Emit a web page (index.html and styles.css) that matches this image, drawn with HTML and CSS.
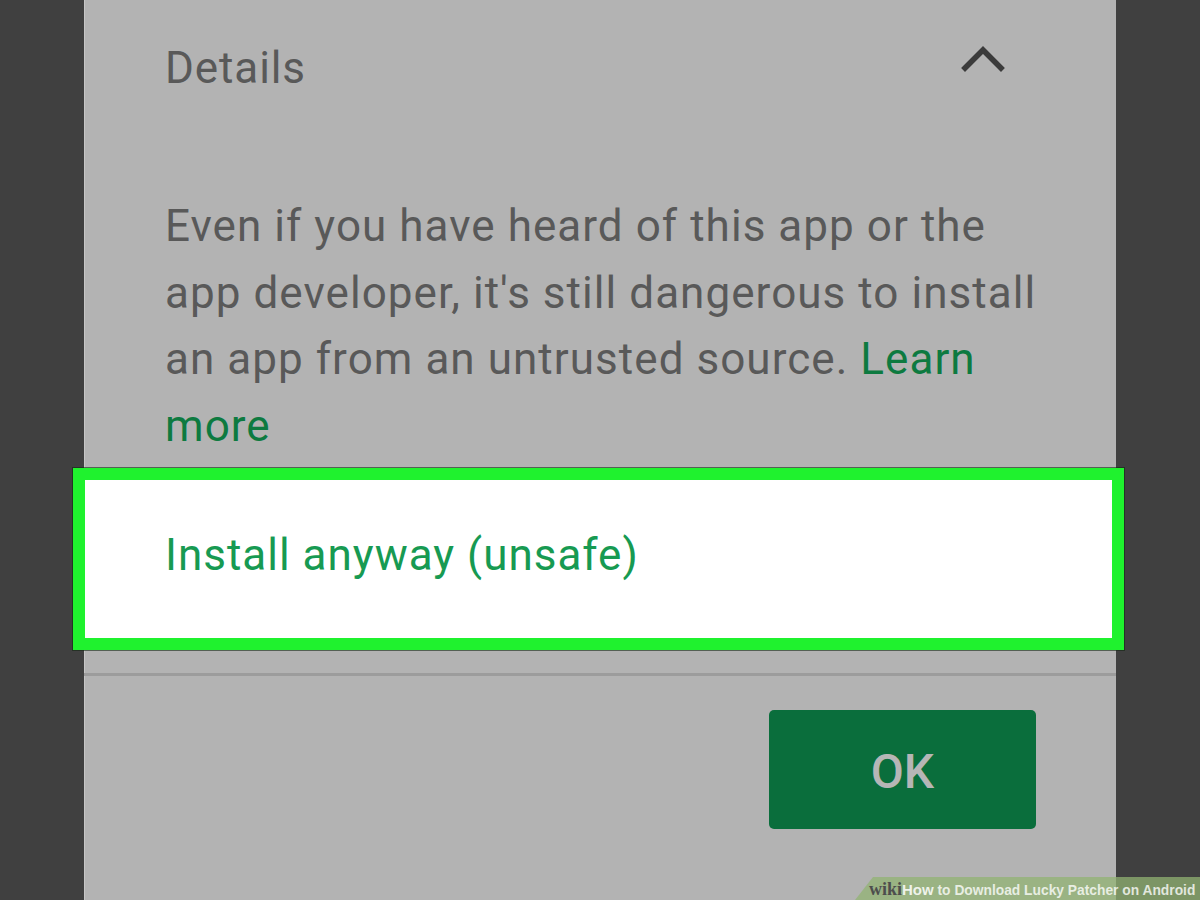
FILE: index.html
```html
<!DOCTYPE html>
<html lang="en">
<head>
<meta charset="utf-8">
<title>Details</title>
<link rel="stylesheet" href="styles.css">
</head>
<body>
<div class="dialog">
  <div class="header">
    <span class="title">Details</span>
    <svg class="chevron" width="44" height="28" viewBox="0 0 44 28" aria-hidden="true">
      <polyline points="4,24 22,6 40,24" fill="none" stroke="#3b3b3b" stroke-width="5.5" stroke-linejoin="miter" stroke-linecap="square"/>
    </svg>
  </div>
  <p class="body-text">Even if you have heard of this app or the<br>app developer, it's still dangerous to install<br>an app from an untrusted source. <span class="link">Learn</span><br><span class="link">more</span></p>
  <div class="install-box">
    <span class="install">Install anyway (unsafe)</span>
  </div>
  <div class="divider"></div>
  <div class="actions">
    <button class="ok" type="button">OK</button>
  </div>
</div>
<div class="watermark"><span class="wiki">wiki</span><span class="how">How</span> to Download Lucky Patcher on Android</div>
</body>
</html>
```
FILE: styles.css
```css
html, body {
  margin: 0;
  padding: 0;
}
body {
  background: #404040;
  font-family: Roboto, "Noto Sans", sans-serif;
  width: 1200px;
  height: 900px;
  overflow: hidden;
  position: relative;
}
.dialog {
  margin-left: 84px;
  width: 1032px;
  height: 900px;
  background: #b3b3b3;
  box-shadow: inset 1px 0 0 #c6c6c6;
  display: flex;
  flex-direction: column;
}
.header {
  display: flex;
  justify-content: space-between;
  align-items: flex-start;
  padding: 35px 111px 0 81px;
}
.title {
  font-size: 44px;
  line-height: 66px;
  letter-spacing: 0.9px;
  color: #595959;
}
.chevron {
  margin-top: 9px;
  display: block;
}
.body-text {
  margin: 92px 0 0 0;
  padding: 0 10px 0 81px;
  font-size: 44px;
  line-height: 66.5px;
  letter-spacing: 1.05px;
  color: #595959;
  white-space: nowrap;
}
.link {
  color: #0d7a40;
}
.install-box {
  margin: 9px -8px 0 -11px;
  border: 12px solid #1ff22e;
  background: #ffffff;
  height: 158px;
  box-sizing: content-box;
  padding: 0 0 0 80px;
  box-shadow: 0 0 0 1px rgba(20, 40, 20, 0.6);
}
.install {
  display: block;
  padding-top: 42px;
  font-size: 44px;
  line-height: 66px;
  letter-spacing: 1px;
  color: #179a52;
}
.divider {
  margin-top: 23px;
  height: 3px;
  background: #9c9c9c;
}
.actions {
  display: flex;
  justify-content: flex-end;
  padding: 34px 80px 0 0;
}
.ok {
  width: 267px;
  height: 119px;
  border: none;
  border-radius: 5px;
  background: #0a6e3c;
  color: #b6b6b6;
  font-family: Roboto, "Noto Sans", sans-serif;
  font-weight: 500;
  font-size: 48px;
  padding: 4px 0 0 0;
}
.watermark {
  position: absolute;
  right: 0;
  bottom: 0;
  width: 345px;
  height: 23px;
  box-sizing: border-box;
  padding-left: 14px;
  background: rgba(146, 179, 115, 0.74);
  clip-path: polygon(18px 0, 100% 0, 100% 100%, 0 100%);
  font-family: "Liberation Sans", Arial, sans-serif;
  font-weight: bold;
  font-size: 13.8px;
  line-height: 24px;
  color: rgba(255, 255, 255, 0.78);
  white-space: nowrap;
}
.wiki {
  color: #4d4d4d;
  font-family: "Liberation Serif", serif;
  font-size: 18px;
}
.how {
  color: rgba(255, 255, 255, 0.85);
  font-size: 15px;
}
```
